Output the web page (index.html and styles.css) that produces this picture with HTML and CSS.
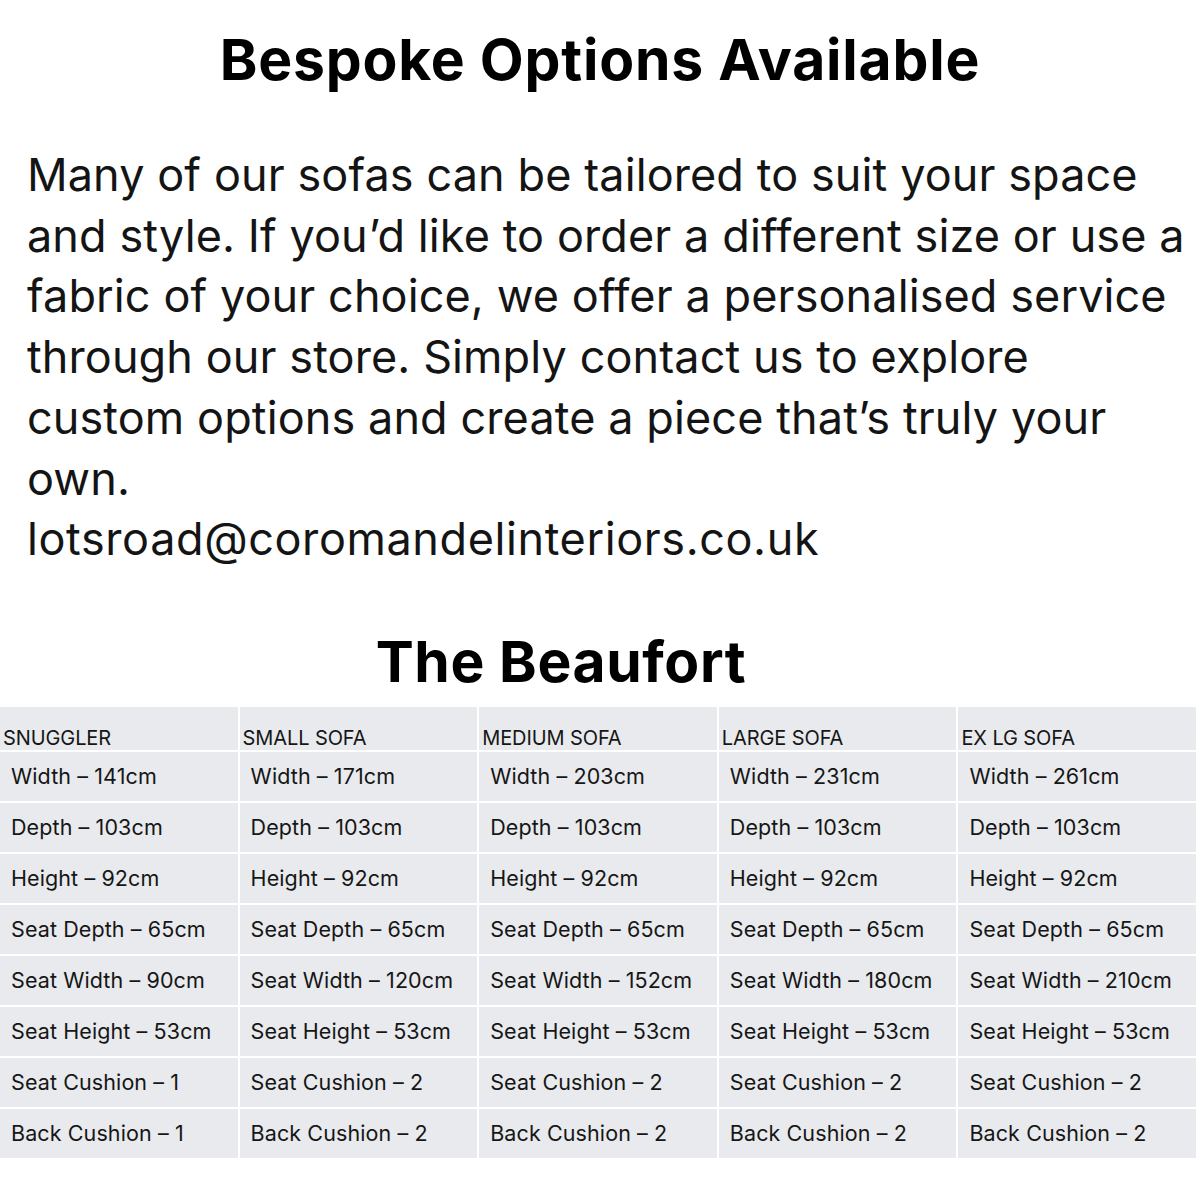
FILE: index.html
```html
<!DOCTYPE html>
<html lang="en">
<head>
<meta charset="utf-8">
<title>Bespoke Options Available</title>
<link rel="stylesheet" href="styles.css">
</head>
<body>
<main class="page">
  <h1 class="title">Bespoke Options Available</h1>
  <p class="intro">
    <span class="line">Many of our sofas can be tailored to suit your space</span>
    <span class="line">and style. If you’d like to order a different size or use a</span>
    <span class="line">fabric of your choice, we offer a personalised service</span>
    <span class="line">through our store. Simply contact us to explore</span>
    <span class="line">custom options and create a piece that’s truly your</span>
    <span class="line">own.</span>
    <span class="line email">lotsroad@coromandelinteriors.co.uk</span>
  </p>
  <h2 class="model">The Beaufort</h2>
  <div class="specs">
    <div class="head">SNUGGLER</div>
    <div class="head">SMALL SOFA</div>
    <div class="head">MEDIUM SOFA</div>
    <div class="head">LARGE SOFA</div>
    <div class="head">EX LG SOFA</div>

    <div class="cell">Width – 141cm</div>
    <div class="cell">Width – 171cm</div>
    <div class="cell">Width – 203cm</div>
    <div class="cell">Width – 231cm</div>
    <div class="cell">Width – 261cm</div>

    <div class="cell">Depth – 103cm</div>
    <div class="cell">Depth – 103cm</div>
    <div class="cell">Depth – 103cm</div>
    <div class="cell">Depth – 103cm</div>
    <div class="cell">Depth – 103cm</div>

    <div class="cell">Height – 92cm</div>
    <div class="cell">Height – 92cm</div>
    <div class="cell">Height – 92cm</div>
    <div class="cell">Height – 92cm</div>
    <div class="cell">Height – 92cm</div>

    <div class="cell">Seat Depth – 65cm</div>
    <div class="cell">Seat Depth – 65cm</div>
    <div class="cell">Seat Depth – 65cm</div>
    <div class="cell">Seat Depth – 65cm</div>
    <div class="cell">Seat Depth – 65cm</div>

    <div class="cell">Seat Width – 90cm</div>
    <div class="cell">Seat Width – 120cm</div>
    <div class="cell">Seat Width – 152cm</div>
    <div class="cell">Seat Width – 180cm</div>
    <div class="cell">Seat Width – 210cm</div>

    <div class="cell">Seat Height – 53cm</div>
    <div class="cell">Seat Height – 53cm</div>
    <div class="cell">Seat Height – 53cm</div>
    <div class="cell">Seat Height – 53cm</div>
    <div class="cell">Seat Height – 53cm</div>

    <div class="cell">Seat Cushion – 1</div>
    <div class="cell">Seat Cushion – 2</div>
    <div class="cell">Seat Cushion – 2</div>
    <div class="cell">Seat Cushion – 2</div>
    <div class="cell">Seat Cushion – 2</div>

    <div class="cell">Back Cushion – 1</div>
    <div class="cell">Back Cushion – 2</div>
    <div class="cell">Back Cushion – 2</div>
    <div class="cell">Back Cushion – 2</div>
    <div class="cell">Back Cushion – 2</div>
  </div>
</main>
</body>
</html>
```

FILE: styles.css
```css
* { box-sizing: border-box; }
html, body { margin: 0; padding: 0; background: #fff; }
body {
  font-family: "Inter", "Liberation Sans", sans-serif;
  color: #111;
  width: 1200px;
}
.page { display: flex; flex-direction: column; }

.title {
  margin: 0;
  padding-top: 26px;
  height: 145px;
  text-align: center;
  font-size: 57px;
  font-weight: 700;
  line-height: 68px;
  letter-spacing: 0.8px;
  color: #000;
}

.intro {
  margin: 0;
  padding-left: 27px;
  font-size: 45px;
  line-height: 60.7px;
  letter-spacing: 0.1px;
  color: #141414;
  display: flex;
  flex-direction: column;
}
.line { white-space: nowrap; }
.email { letter-spacing: 0.6px; }

.model {
  margin: 0;
  padding-top: 58px;
  padding-right: 78px;
  height: 137px;
  text-align: center;
  font-size: 57px;
  font-weight: 700;
  line-height: 68px;
  letter-spacing: 0.6px;
  color: #000;
}

.specs {
  display: grid;
  grid-template-columns: repeat(5, 1fr);
  grid-template-rows: 43px repeat(8, 49px);
  gap: 2px;
  width: 1196px;
}
.head, .cell {
  background: #e8eaed;
  color: #161616;
  white-space: nowrap;
}
.head {
  font-size: 20px;
  letter-spacing: -0.1px;
  padding: 0 0 0 3px;
  display: flex;
  align-items: flex-end;
}
.cell {
  font-size: 21.5px;
  letter-spacing: 0.1px;
  padding: 0 0 0 11px;
  display: flex;
  align-items: center;
}
```
